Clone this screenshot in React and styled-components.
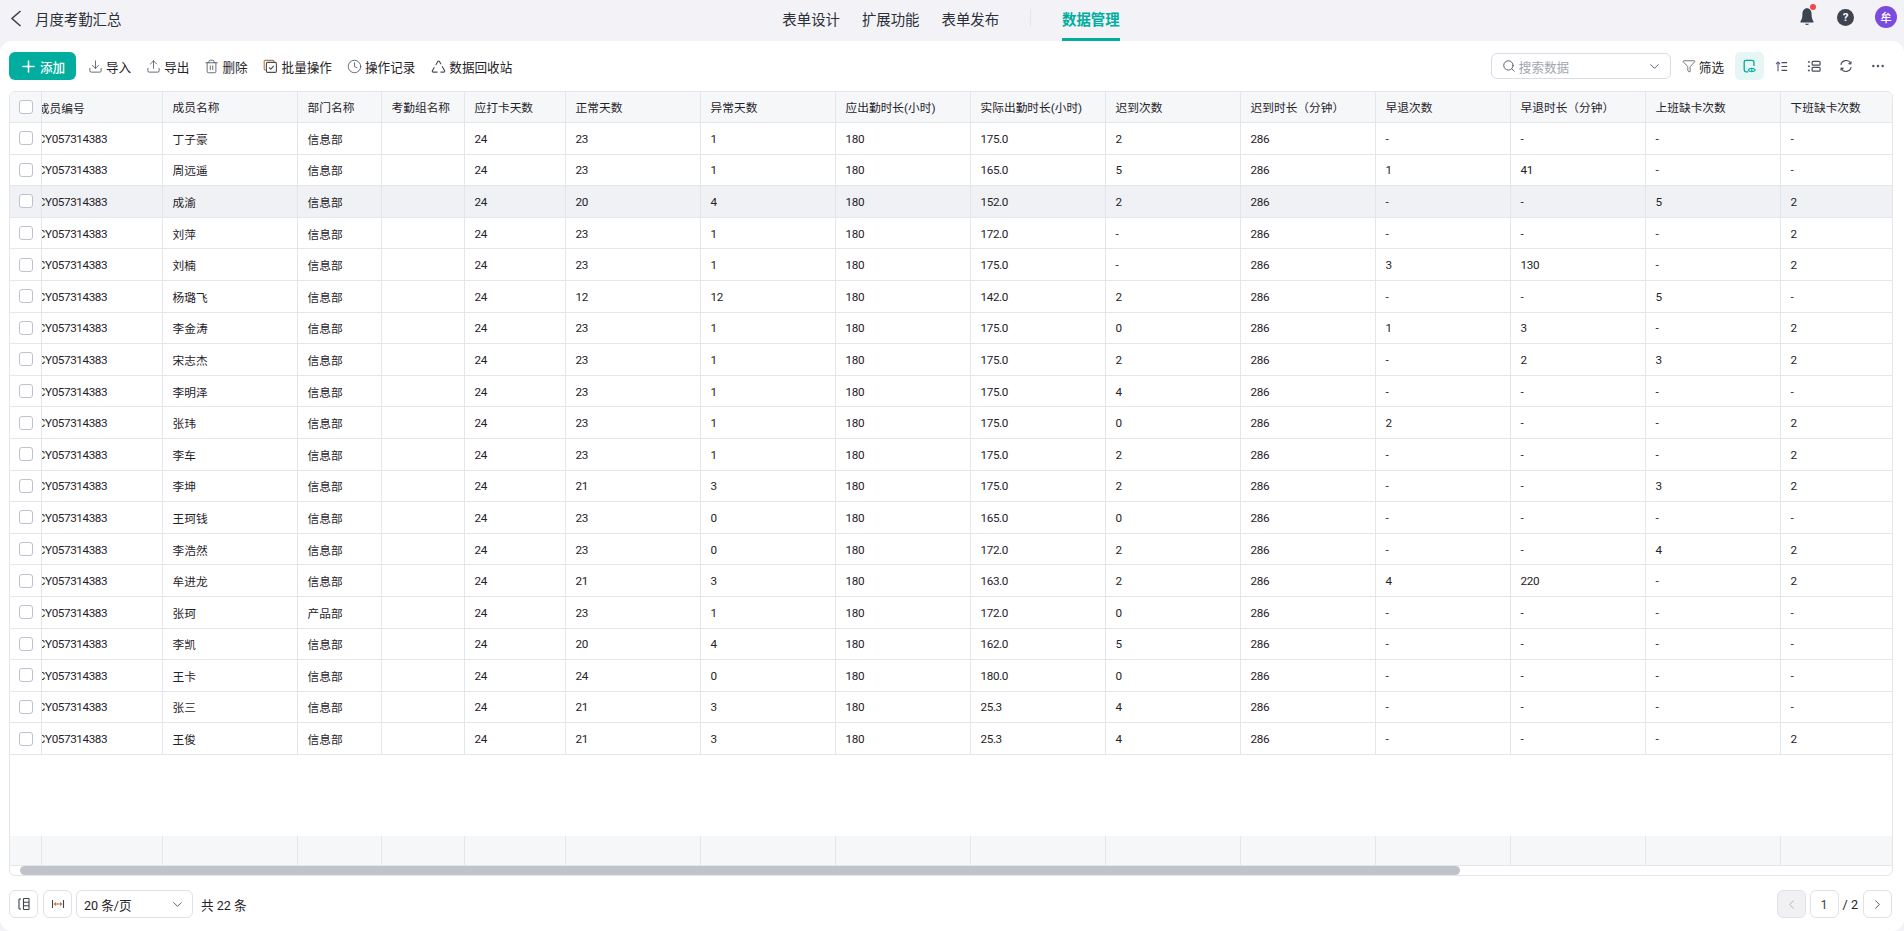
import React from "react";
import styled, { createGlobalStyle } from "styled-components";
import {
  ChevronLeft,
  ChevronRight,
  ChevronDown,
  Plus,
  Download,
  Upload,
  Trash2,
  Clock,
  Search,
  Funnel,
  Ellipsis,
} from "lucide-react";

const teal = "#00ad9f";
const line = "#e5e6ec";
const ink = "#1f2329";
const FONT = `Roboto, "Noto Sans CJK SC", sans-serif`;

const COLUMNS =
  "32px 121px 135px 84px 83px 101px 135px 135px 135px 135px 135px 135px 135px 135px 135px 112px";

const GlobalStyle = createGlobalStyle`
  html, body { margin: 0; padding: 0; background: #f2f2f7; }
  body { font-family: ${FONT}; color: ${ink}; overflow: hidden; }
  * { box-sizing: border-box; }
`;

const Page = styled.div`
  width: 1904px;
  height: 931px;
  display: flex;
  flex-direction: column;
`;

const Header = styled.header`
  height: 41px;
  flex: none;
  display: grid;
  grid-template-columns: 1fr auto 1fr;
  align-items: center;
  padding: 0 9px 0 7px;
`;

const TitleBox = styled.div`
  display: flex;
  align-items: center;
  gap: 13px;
  padding: 0 0 5px 3px;
  font-size: 14.4px;
  color: #2b2f38;
`;

const Nav = styled.nav`
  display: flex;
  align-items: center;
  height: 41px;
  gap: 22px;
`;

const NavItem = styled.a`
  height: 41px;
  display: flex;
  align-items: center;
  padding-bottom: 5px;
  font-size: 14.4px;
  color: ${(p) => (p.$active ? teal : "#2b2f38")};
  font-weight: ${(p) => (p.$active ? 700 : 400)};
  border-bottom: 3px solid ${(p) => (p.$active ? teal : "transparent")};
  border-top: 3px solid transparent;
  margin-left: ${(p) => (p.$active ? "9px" : "0")};
`;

const NavDivider = styled.span`
  width: 1px;
  height: 18px;
  margin: 0 0 5px 9px;
  background: #e4e4ea;
`;

const HeaderRight = styled.div`
  display: flex;
  justify-content: flex-end;
  align-items: center;
  gap: 21px;
  padding-bottom: 7px;
  margin-right: -2px;
`;

const BellBox = styled.span`
  position: relative;
  display: flex;
  width: 20px;
  height: 20px;
  margin-right: -1px;
`;

const RedDot = styled.i`
  position: absolute;
  top: -3px;
  right: 1px;
  width: 6px;
  height: 6px;
  border-radius: 50%;
  background: #f0484d;
`;

const HelpBadge = styled.span`
  width: 17px;
  height: 17px;
  border-radius: 50%;
  background: #3d434f;
  color: #fff;
  font-size: 11.5px;
  font-weight: 700;
  display: flex;
  align-items: center;
  justify-content: center;
`;

const Avatar = styled.span`
  width: 22px;
  height: 22px;
  border-radius: 50%;
  background: #7b4be0;
  color: #fff;
  font-size: 11.5px;
  font-weight: 500;
  display: flex;
  align-items: center;
  justify-content: center;
`;

const Panel = styled.main`
  flex: 1;
  min-height: 0;
  background: #fff;
  border-radius: 12px;
  padding: 11px 11px 0 9px;
  display: flex;
  flex-direction: column;
`;

const Toolbar = styled.div`
  height: 28px;
  flex: none;
  display: flex;
  align-items: center;
  justify-content: space-between;
  padding-right: 1px;
`;

const ToolGroup = styled.div`
  display: flex;
  align-items: center;
  gap: ${(p) => p.$gap || 15}px;
`;

const AddButton = styled.button`
  width: 67px;
  height: 28px;
  margin-right: -3px;
  border: 0;
  border-radius: 6px;
  background: ${teal};
  color: #fff;
  font: 500 12.6px ${FONT};
  display: flex;
  align-items: center;
  padding: 0 0 0 10px;
  gap: 2px;
`;

const ToolItem = styled.span`
  display: flex;
  align-items: center;
  gap: 3px;
  font-size: 12.6px;
  color: ${ink};
  svg {
    color: #474d59;
    flex: none;
  }
`;

const BatchItem = styled(ToolItem)`
  gap: 4px;
`;

const RecycleItem = styled(ToolItem)`
  margin-left: 1px;
`;

const SearchBox = styled.div`
  width: 180px;
  height: 26px;
  margin-right: -2px;
  border: 1px solid #d9dce5;
  border-radius: 6px;
  display: flex;
  align-items: center;
  gap: 3px;
  padding: 0 8px 0 10px;
  font-size: 12.6px;
  color: #a2a6b0;
  svg {
    color: #474d59;
    flex: none;
  }
`;

const Grow = styled.span`
  flex: 1;
`;

const IconButton = styled.span`
  width: 29px;
  height: 28px;
  border-radius: 5px;
  display: flex;
  align-items: center;
  justify-content: center;
  color: #474d59;
  background: ${(p) => (p.$active ? "#e6f6f4" : "transparent")};
`;

const IconRow = styled.div`
  display: flex;
  align-items: center;
  gap: 3px;
  margin-left: -2px;
`;

const TableFrame = styled.section`
  margin-top: 11px;
  height: 785px;
  flex: none;
  display: flex;
  flex-direction: column;
  border: 1px solid ${line};
  border-radius: 6px;
  overflow: hidden;
`;

const Row = styled.div`
  display: grid;
  grid-template-columns: ${COLUMNS};
  flex: none;
  height: ${(p) => p.$height}px;
  background: ${(p) => p.$bg || "#fff"};
  border-bottom: 1px solid ${line};
  font-size: 11.7px;
  color: ${ink};
`;

const Cell = styled.div`
  display: flex;
  align-items: center;
  padding: ${(p) => (p.$tight ? "1px" : "0")} 9.6px 0;
  white-space: nowrap;
  overflow: hidden;
  border-right: 1px solid ${line};
  letter-spacing: ${(p) => (p.$tight ? "-0.4px" : "0")};
  &:last-child {
    border-right: 0;
  }
`;

const HeadCell = styled(Cell)`
  padding-bottom: 1px;
`;

const CheckCell = styled(Cell)`
  padding: 0;
  justify-content: center;
`;

const ScrolledCell = styled(Cell)`
  padding-left: 0;
  padding-right: 0;
  span {
    margin-left: -4.2px;
  }
`;

const Checkbox = styled.span`
  width: 14px;
  height: 14px;
  border: 1px solid #bfc2cd;
  border-radius: 3px;
  background: #fff;
`;

const BodyGap = styled.div`
  flex: 1;
  min-height: 0;
`;

const ScrollTrack = styled.div`
  height: 9px;
  flex: none;
  padding-left: 10px;
`;

const ScrollThumb = styled.div`
  width: 1440px;
  height: 100%;
  border-radius: 5px;
  background: #c1c3cb;
`;

const Footer = styled.footer`
  margin-top: 14px;
  height: 28px;
  flex: none;
  display: flex;
  align-items: center;
  justify-content: space-between;
  padding-right: 1px;
`;

const PagerGroup = styled.div`
  display: flex;
  align-items: center;
  font-size: 12.6px;
  gap: ${(p) => p.$gap}px;
`;

const SquareButton = styled.span`
  width: 29px;
  height: 28px;
  border: 1px solid #dfe1e8;
  border-radius: 6px;
  display: flex;
  align-items: center;
  justify-content: center;
  color: ${(p) => (p.$disabled ? "#a9acb5" : "#3d434f")};
  background: ${(p) => (p.$disabled ? "#f1f1f3" : "#fff")};
`;

const SizeSelect = styled.div`
  width: 117px;
  height: 28px;
  margin: 0 3px 0 -1px;
  border: 1px solid #dfe1e8;
  border-radius: 6px;
  display: flex;
  align-items: center;
  justify-content: space-between;
  padding: 0 7px;
  svg {
    color: #474d59;
  }
`;

const PageLabel = styled.span`
  padding-right: 1px;
  color: ${ink};
`;

const BackIcon = () => (
  <svg width="12" height="17" viewBox="0 0 12 17" fill="none" stroke="#3d434f" strokeWidth="1.6">
    <path d="M10.500 1L2 8.500l8.500 7.500" />
  </svg>
);

const BatchIcon = () => (
  <svg width="15" height="15" viewBox="0 0 15 15" fill="none" stroke="currentColor" strokeWidth="1.1">
    <path d="M3 11H2.200A1 1 0 0 1 1.200 10V2.400a1 1 0 0 1 1-1H10a1 1 0 0 1 1 1V3" stroke="#b87a4a" />
    <rect x="3.400" y="3.400" width="10" height="10" rx="1.200" />
    <path d="M6 8.400l1.800 1.800 3-3.400" />
  </svg>
);

const RecycleIcon = () => (
  <svg width="15" height="15" viewBox="0 0 15 15" fill="none" stroke="currentColor" strokeWidth="1.1">
    <path d="M4.800 6L6.700 2.400a1 1 0 0 1 1.700 0L10 5.200" />
    <path d="M11 7.200l2.600 4.400a1 1 0 0 1-.9 1.500H9.500" />
    <path d="M6.500 13.100H2.300a1 1 0 0 1-.9-1.500L3.400 8.200" />
  </svg>
);

const EyeNoteIcon = () => (
  <svg width="15" height="15" viewBox="0 0 17 17" fill="none" stroke={teal} strokeWidth="1.5">
    <path d="M7 14.500H4.500a2 2 0 0 1-2-2v-9a2 2 0 0 1 2-2h7a2 2 0 0 1 2 2V8" />
    <path d="M7 12.500c1.600-2.600 6.400-2.600 8 0-1.600 2.600-6.400 2.600-8 0z" strokeWidth="1.300" />
    <circle cx="11" cy="12.500" r="1" fill={teal} stroke="none" />
  </svg>
);

const SortIcon = () => (
  <svg width="13" height="13" viewBox="0 0 15 15" fill="none" stroke="currentColor" strokeWidth="1.300">
    <path d="M3.500 13V2.500" stroke="#6a4a8c" />
    <path d="M1.200 4.800l2.300-2.300 2.300 2.300" stroke="#6a4a8c" />
    <path d="M7.500 3h6.500M7.500 7.500h6.500M7.500 12h6.500" />
  </svg>
);

const GroupIcon = () => (
  <svg width="14" height="14" viewBox="0 0 15 15" fill="none" stroke="currentColor" strokeWidth="1.300">
    <rect x="5.500" y="2.500" width="8.500" height="4" rx="1" />
    <rect x="5.500" y="9" width="8.500" height="4" rx="1" />
    <path d="M1 3.200h2M1 7.800h2M1 12.400h2" strokeWidth="1.700" />
  </svg>
);

const RefreshIcon = () => (
  <svg width="14" height="14" viewBox="0 0 15 15" fill="none" stroke="currentColor" strokeWidth="1.200">
    <path d="M2 6.200A5.600 5.600 0 0 1 12.400 4.600" />
    <path d="M13 8.800A5.600 5.600 0 0 1 2.600 10.400" />
    <path d="M12.900 2.600l-.2 2.600-2.600-.3" />
    <path d="M2.100 12.400l.2-2.600 2.600.3" />
  </svg>
);

const ColumnsIcon = () => (
  <svg width="14" height="14" viewBox="0 0 14 14" fill="none" stroke="currentColor" strokeWidth="1.100">
    <rect x="6.500" y="1.500" width="5.500" height="11" rx="0.600" />
    <path d="M6.500 5.200H12M6.500 8.800H12M2 2v10M2 2h2M2 12h2" />
  </svg>
);

const FitWidthIcon = () => (
  <svg width="14" height="14" viewBox="0 0 14 14" fill="none" stroke="currentColor" strokeWidth="1.100">
    <path d="M1.500 3v8M12.500 3v8" />
    <path d="M3.500 7h7" stroke="#b87a4a" />
    <path d="M5 5.400L3.400 7 5 8.600M9 5.400L10.600 7 9 8.600" stroke="#b87a4a" />
  </svg>
);

const headers = [
  "成员名称",
  "部门名称",
  "考勤组名称",
  "应打卡天数",
  "正常天数",
  "异常天数",
  "应出勤时长(小时)",
  "实际出勤时长(小时)",
  "迟到次数",
  "迟到时长（分钟）",
  "早退次数",
  "早退时长（分钟）",
  "上班缺卡次数",
  "下班缺卡次数",
];

// name, dept, normal, abnormal, actual, late, early, earlyMin, missIn, missOut
const rows = [
  ["丁子豪", "信息部", "23", "1", "175.0", "2", "-", "-", "-", "-"],
  ["周远遥", "信息部", "23", "1", "165.0", "5", "1", "41", "-", "-"],
  ["成渝", "信息部", "20", "4", "152.0", "2", "-", "-", "5", "2"],
  ["刘萍", "信息部", "23", "1", "172.0", "-", "-", "-", "-", "2"],
  ["刘楠", "信息部", "23", "1", "175.0", "-", "3", "130", "-", "2"],
  ["杨璐飞", "信息部", "12", "12", "142.0", "2", "-", "-", "5", "-"],
  ["李金涛", "信息部", "23", "1", "175.0", "0", "1", "3", "-", "2"],
  ["宋志杰", "信息部", "23", "1", "175.0", "2", "-", "2", "3", "2"],
  ["李明泽", "信息部", "23", "1", "175.0", "4", "-", "-", "-", "-"],
  ["张玮", "信息部", "23", "1", "175.0", "0", "2", "-", "-", "2"],
  ["李车", "信息部", "23", "1", "175.0", "2", "-", "-", "-", "2"],
  ["李坤", "信息部", "21", "3", "175.0", "2", "-", "-", "3", "2"],
  ["王珂钱", "信息部", "23", "0", "165.0", "0", "-", "-", "-", "-"],
  ["李浩然", "信息部", "23", "0", "172.0", "2", "-", "-", "4", "2"],
  ["牟进龙", "信息部", "21", "3", "163.0", "2", "4", "220", "-", "2"],
  ["张珂", "产品部", "23", "1", "172.0", "0", "-", "-", "-", "-"],
  ["李凯", "信息部", "20", "4", "162.0", "5", "-", "-", "-", "-"],
  ["王卡", "信息部", "24", "0", "180.0", "0", "-", "-", "-", "-"],
  ["张三", "信息部", "21", "3", "25.3", "4", "-", "-", "-", "-"],
  ["王俊", "信息部", "21", "3", "25.3", "4", "-", "-", "-", "2"],
];

const DataRow = ({ row, active }) => {
  const [name, dept, normal, abnormal, actual, late, early, earlyMin, missIn, missOut] = row;
  return (
    <Row $height={31.6} $bg={active ? "#f0f1f5" : undefined}>
      <CheckCell>
        <Checkbox />
      </CheckCell>
      <ScrolledCell $tight>
        <span>CY057314383</span>
      </ScrolledCell>
      <Cell>{name}</Cell>
      <Cell>{dept}</Cell>
      <Cell />
      <Cell $tight>24</Cell>
      <Cell $tight>{normal}</Cell>
      <Cell $tight>{abnormal}</Cell>
      <Cell $tight>180</Cell>
      <Cell $tight>{actual}</Cell>
      <Cell $tight>{late}</Cell>
      <Cell $tight>286</Cell>
      <Cell $tight>{early}</Cell>
      <Cell $tight>{earlyMin}</Cell>
      <Cell $tight>{missIn}</Cell>
      <Cell $tight>{missOut}</Cell>
    </Row>
  );
};

const App = () => (
  <Page>
    <GlobalStyle />
    <Header>
      <TitleBox>
        <BackIcon />
        <span>月度考勤汇总</span>
      </TitleBox>
      <Nav>
        <NavItem>表单设计</NavItem>
        <NavItem>扩展功能</NavItem>
        <NavItem>表单发布</NavItem>
        <NavDivider />
        <NavItem $active>数据管理</NavItem>
      </Nav>
      <HeaderRight>
        <BellBox>
          <svg width="20" height="20" viewBox="0 0 24 24" fill="#3d434f">
            <path d="M12 1.500c-3.400 0-5.500 3-5.500 7 0 5.500-1.500 7.500-2.300 8.800-.3.500 0 1.200.7 1.200h14.200c.7 0 1-.7.700-1.200-.8-1.300-2.300-3.300-2.300-8.800 0-4-2.100-7-5.500-7z" />
            <path d="M9.500 20a2.700 2.700 0 0 0 5 0z" />
          </svg>
          <RedDot />
        </BellBox>
        <HelpBadge>?</HelpBadge>
        <Avatar>牟</Avatar>
      </HeaderRight>
    </Header>
    <Panel>
      <Toolbar>
        <ToolGroup>
          <AddButton>
            <Plus size={19} strokeWidth={2} />
            添加
          </AddButton>
          <ToolItem>
            <Download size={15} strokeWidth={1.3} />
            导入
          </ToolItem>
          <ToolItem>
            <Upload size={15} strokeWidth={1.3} />
            导出
          </ToolItem>
          <ToolItem>
            <Trash2 size={15} strokeWidth={1.3} />
            删除
          </ToolItem>
          <BatchItem>
            <BatchIcon />
            批量操作
          </BatchItem>
          <ToolItem>
            <Clock size={15} strokeWidth={1.3} />
            操作记录
          </ToolItem>
          <RecycleItem>
            <RecycleIcon />
            数据回收站
          </RecycleItem>
        </ToolGroup>
        <ToolGroup $gap={13}>
          <SearchBox>
            <Search size={14} strokeWidth={1.5} />
            <span>搜索数据</span>
            <Grow />
            <ChevronDown size={15} strokeWidth={1.4} />
          </SearchBox>
          <ToolItem>
            <Funnel size={14} strokeWidth={1.3} />
            筛选
          </ToolItem>
          <IconRow>
            <IconButton $active>
              <EyeNoteIcon />
            </IconButton>
            <IconButton>
              <SortIcon />
            </IconButton>
            <IconButton>
              <GroupIcon />
            </IconButton>
            <IconButton>
              <RefreshIcon />
            </IconButton>
            <IconButton>
              <Ellipsis size={16} strokeWidth={1.6} />
            </IconButton>
          </IconRow>
        </ToolGroup>
      </Toolbar>

      <TableFrame>
        <Row $height={31} $bg="#f6f7f9">
          <CheckCell>
            <Checkbox />
          </CheckCell>
          <ScrolledCell>
            <span>成员编号</span>
          </ScrolledCell>
          {headers.map((title) => (
            <HeadCell key={title}>{title}</HeadCell>
          ))}
        </Row>
        {rows.map((row, i) => (
          <DataRow key={row[0]} row={row} active={i === 2} />
        ))}
        <BodyGap />
        <Row $height={30} $bg="#f6f7f9">
          {Array.from({ length: 16 }, (_, i) => (
            <Cell key={i} />
          ))}
        </Row>
        <ScrollTrack>
          <ScrollThumb />
        </ScrollTrack>
      </TableFrame>

      <Footer>
        <PagerGroup $gap={5}>
          <SquareButton>
            <ColumnsIcon />
          </SquareButton>
          <SquareButton>
            <FitWidthIcon />
          </SquareButton>
          <SizeSelect>
            <span>20 条/页</span>
            <ChevronDown size={15} strokeWidth={1.4} />
          </SizeSelect>
          <span>共 22 条</span>
        </PagerGroup>
        <PagerGroup $gap={4}>
          <SquareButton $disabled>
            <ChevronLeft size={15} strokeWidth={1.4} />
          </SquareButton>
          <SquareButton>1</SquareButton>
          <PageLabel>/ 2</PageLabel>
          <SquareButton>
            <ChevronRight size={15} strokeWidth={1.4} />
          </SquareButton>
        </PagerGroup>
      </Footer>
    </Panel>
  </Page>
);

export default App;
